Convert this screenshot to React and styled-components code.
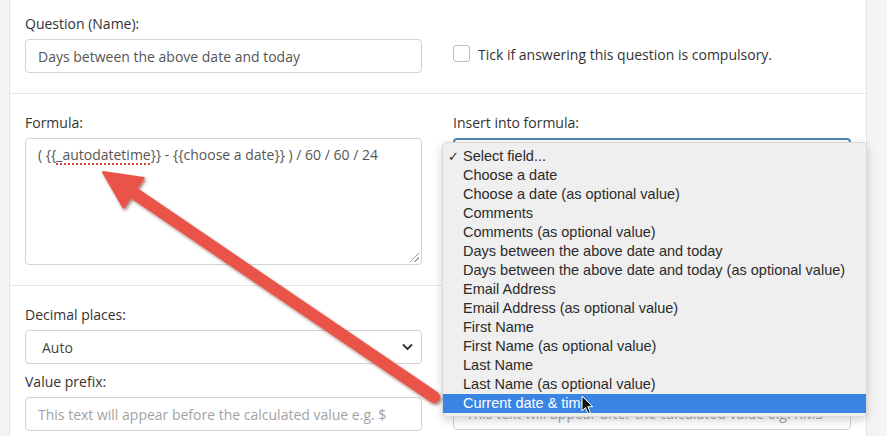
import React from "react";
import styled, { createGlobalStyle } from "styled-components";

const Global = createGlobalStyle`
  html, body { margin: 0; padding: 0; background: #f4f4f4; }
  body { font-family: "Open Sans", "Liberation Sans", sans-serif; }
  * { box-sizing: border-box; }
`;

const Stage = styled.div`
  position: relative;
  width: 887px;
  height: 436px;
  overflow: hidden;
  display: flex;
  background: #f4f4f4;
`;

const Gutter = styled.div`
  flex: 0 0 ${(p) => p.$w}px;
  background: #f4f4f4;
`;

const Panel = styled.div`
  flex: 0 0 858px;
  background: #fff;
  border-left: 1px solid #e4e4e4;
  border-right: 1px solid #e4e4e4;
  display: flex;
  flex-direction: column;
`;

const Section = styled.div`
  display: grid;
  grid-template-columns: 397px 398px;
  column-gap: 31px;
  padding: ${(p) => p.$top}px 15px ${(p) => p.$bottom}px;
  border-bottom: ${(p) => (p.$last ? "none" : "1px solid #e6e6e6")};
`;

const Column = styled.div`
  display: flex;
  flex-direction: column;
  padding-top: ${(p) => p.$pt || 0}px;
`;

const Label = styled.div`
  font-size: 14px;
  line-height: 20px;
  color: #333;
  margin-top: ${(p) => p.$mt || 0}px;
  margin-bottom: 5px;
`;

const TextInput = styled.input`
  height: 34px;
  width: 100%;
  border: 1px solid #d2d2d2;
  border-radius: 4px;
  padding: 6px 12px;
  font-family: "Open Sans", "Liberation Sans", sans-serif;
  font-size: 14px;
  color: #555;
  background: #fff;
  outline: none;
  &::placeholder { color: #a3a3a3; }
`;

const FakeTextarea = styled.div`
  position: relative;
  height: 127px;
  border: 1px solid #d2d2d2;
  border-radius: 4px;
  padding: 6px 12px;
  font-size: 14px;
  line-height: 20px;
  color: #555;
  background: #fff;
  &::after {
    content: "";
    position: absolute;
    right: 2px;
    bottom: 2px;
    width: 9px;
    height: 9px;
    background: linear-gradient(
      135deg,
      transparent 0 46%,
      #9a9a9a 46% 54%,
      transparent 54% 72%,
      #9a9a9a 72% 80%,
      transparent 80%
    );
  }
`;

const Misspelt = styled.span`
  text-decoration: underline dotted #d9453b;
  text-decoration-thickness: 1.5px;
  text-underline-offset: 3px;
`;

const SelectBox = styled.div`
  height: 34px;
  border: ${(p) => (p.$focus ? "2px solid #4f86b3" : "1px solid #d2d2d2")};
  border-radius: 4px;
  padding: 0 8px 0 16px;
  display: flex;
  align-items: center;
  justify-content: space-between;
  font-size: 14px;
  color: #444;
  background: #fff;
`;

const CheckRow = styled.label`
  display: flex;
  align-items: center;
  gap: 8px;
  height: 20px;
  font-size: 14px;
  color: #333;
`;

const CheckBox = styled.span`
  width: 17px;
  height: 17px;
  border: 1px solid #bdbdbd;
  border-radius: 3px;
  background: #fff;
  margin-top: -2px;
`;

const Dropdown = styled.div`
  position: absolute;
  left: 442px;
  top: 142px;
  width: 425px;
  padding: 4px 0 3px;
  background: #efefef;
  border: 1px solid #d9d9d9;
  border-radius: 5px;
  box-shadow: 0 3px 10px rgba(0, 0, 0, 0.18);
  font-family: "Liberation Sans", Arial, sans-serif;
  font-size: 14.5px;
`;

const Option = styled.div`
  position: relative;
  height: 19px;
  line-height: 19px;
  padding-left: 20px;
  color: ${(p) => (p.$active ? "#fff" : "#2b2b2b")};
  background: ${(p) => (p.$active ? "#3a84e4" : "transparent")};
  white-space: nowrap;
`;

const Tick = styled.span`
  position: absolute;
  left: 5px;
  top: 0;
  font-size: 13px;
`;

const Overlay = styled.svg`
  position: absolute;
  left: 0;
  top: 0;
  pointer-events: none;
`;

const Chevron = () => (
  <svg width="11" height="8" viewBox="0 0 11 8">
    <path d="M1.5 2 L5.5 6 L9.5 2" fill="none" stroke="#333" strokeWidth="1.8" strokeLinecap="round" strokeLinejoin="round" />
  </svg>
);

const options = [
  "Select field...",
  "Choose a date",
  "Choose a date (as optional value)",
  "Comments",
  "Comments (as optional value)",
  "Days between the above date and today",
  "Days between the above date and today (as optional value)",
  "Email Address",
  "Email Address (as optional value)",
  "First Name",
  "First Name (as optional value)",
  "Last Name",
  "Last Name (as optional value)",
  "Current date & time",
];

// arrow geometry
const tip = [103, 172];
const tail = [434, 397];
const dx = tail[0] - tip[0];
const dy = tail[1] - tip[1];
const len = Math.hypot(dx, dy);
const ux = dx / len;
const uy = dy / len;
const px = uy;
const py = -ux;
const hl = 37;
const hw = 18;
const base = [tip[0] + ux * hl, tip[1] + uy * hl];
const c1 = [base[0] + px * hw, base[1] + py * hw];
const c2 = [base[0] - px * hw, base[1] - py * hw];
const shaftStart = [tip[0] + ux * (hl - 4), tip[1] + uy * (hl - 4)];

export default function App() {
  return (
    <>
      <Global />
      <Stage>
        <Gutter $w={9} />
        <Panel>
          <Section $top={14} $bottom={20}>
            <Column>
              <Label>Question (Name):</Label>
              <TextInput readOnly defaultValue="Days between the above date and today" />
            </Column>
            <Column $pt={30}>
              <CheckRow>
                <CheckBox />
                Tick if answering this question is compulsory.
              </CheckRow>
            </Column>
          </Section>
          <Section $top={19} $bottom={20}>
            <Column>
              <Label>Formula:</Label>
              <FakeTextarea>
                ( {"{{"}
                <Misspelt>_autodatetime</Misspelt>
                {"}}"} - {"{{choose a date}}"} ) / 60 / 60 / 24
              </FakeTextarea>
            </Column>
            <Column>
              <Label>Insert into formula:</Label>
              <SelectBox $focus />
            </Column>
          </Section>
          <Section $top={19} $bottom={0} $last>
            <Column>
              <Label>Decimal places:</Label>
              <SelectBox>
                Auto
                <Chevron />
              </SelectBox>
              <Label $mt={8}>Value prefix:</Label>
              <TextInput readOnly placeholder="This text will appear before the calculated value e.g. $" />
            </Column>
            <Column $pt={91}>
              <TextInput readOnly placeholder="This text will appear after the calculated value e.g. RMS" />
            </Column>
          </Section>
        </Panel>
        <Gutter $w={20} />

        <Dropdown>
          {options.map((o, i) => (
            <Option key={o} $active={i === options.length - 1}>
              {i === 0 && <Tick>✓</Tick>}
              {o}
            </Option>
          ))}
        </Dropdown>

        <Overlay width="887" height="436" viewBox="0 0 887 436">
          <defs>
            <filter id="sh" x="-20%" y="-20%" width="140%" height="140%">
              <feDropShadow dx="1.5" dy="2" stdDeviation="1.6" floodColor="#5a1a14" floodOpacity="0.55" />
            </filter>
          </defs>
          <g filter="url(#sh)" fill="#ea5247" stroke="#ea5247">
            <line
              x1={shaftStart[0]}
              y1={shaftStart[1]}
              x2={tail[0]}
              y2={tail[1]}
              strokeWidth="12"
              strokeLinecap="round"
            />
            <polygon
              points={`${tip[0]},${tip[1]} ${c1[0]},${c1[1]} ${c2[0]},${c2[1]}`}
              strokeWidth="2"
              strokeLinejoin="round"
            />
          </g>
          <path
            d="M582 396 L582 411 L585.5 407.6 L588 413.5 L590.3 412.5 L587.8 406.7 L592.6 406.7 Z"
            fill="#111"
            stroke="#fff"
            strokeWidth="1"
            strokeLinejoin="round"
          />
        </Overlay>
      </Stage>
    </>
  );
}
